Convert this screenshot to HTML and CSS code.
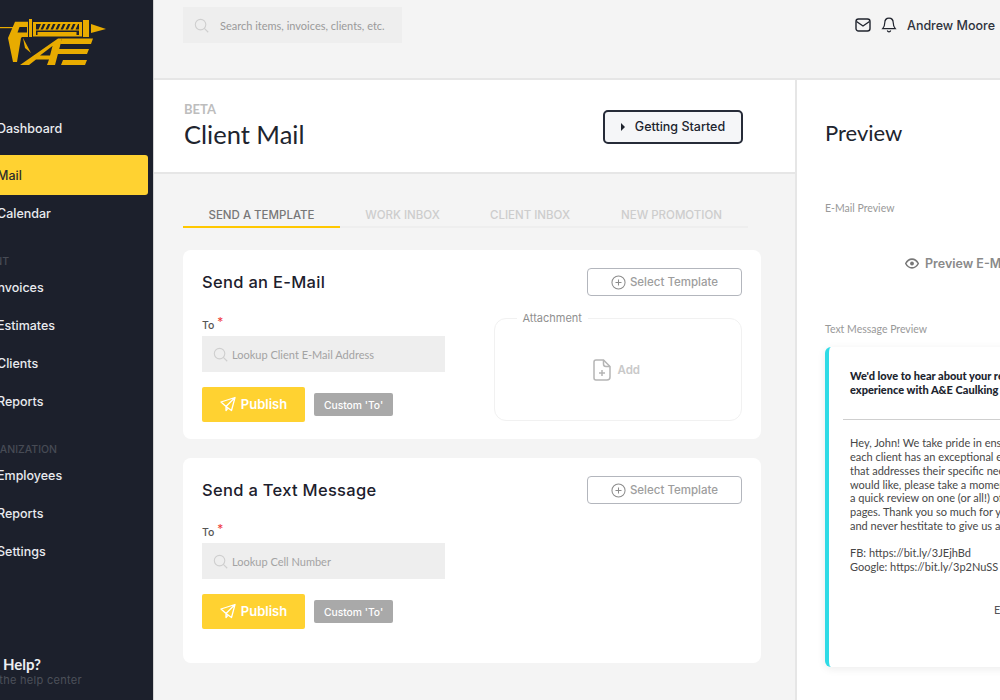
FILE: index.html
```html
<!DOCTYPE html>
<html lang="en">
<head>
    <meta charset="UTF-8">
    <title>Client Mail</title>
    <link rel="stylesheet" href="styles.css">
</head>
<body>
    <div class="app">
        <aside class="sidebar">
            <svg class="logo" viewBox="0 0 110 70" xmlns="http://www.w3.org/2000/svg">
                <rect x="0" y="27" width="16" height="1.2"/>
                <path d="M15 21.700H28V37H22L21 38L17 62H13L8 38Z"/>
                <path class="logo-cut" d="M19.500 27H27V32.500H17.500Z"/>
                <path d="M23 38L31 53L25 48Z"/>
                <rect x="29" y="19" width="3" height="18"/>
                <path d="M33 22H82V36.500H33Z"/>
                <path class="logo-cut" d="M36 24H41L38.500 29.500H36ZM43 24H45.500L43 29.500H40.500ZM48 24H50.500L48 29.500H45.500ZM53 24H55.500L53 29.500H50.500ZM58 24H60.500L58 29.500H55.500ZM63 24H65.500L63 29.500H60.500ZM68 24H70.500L68 29.500H65.500ZM73 24H75.500L73 29.500H70.500ZM78 24H79V29.500H75.500ZM36 30.500H79V32H37.500V35H36ZM76.500 32H79V35H76.500Z"/>
                <rect x="83" y="20" width="6" height="17"/>
                <path d="M91 24L106 29L91 33Z"/>
                <path d="M20 65L58 38.500H62L55 65H47L49 59.500H36L29 65ZM52.500 46L40 55.500H50Z"/>
                <path d="M62 38.500H93L91 44H60ZM58 49H89L87 54H56ZM63 60H87L85 65H61Z"/>
            </svg>

            <nav class="nav">
                <a class="nav-item">Dashboard</a>
                <a class="nav-item nav-item-active">Mail</a>
                <a class="nav-item">Calendar</a>
                <div class="nav-label nav-label-short"><span>MANAGEMENT</span></div>
                <a class="nav-item nav-item-inset">Invoices</a>
                <a class="nav-item">Estimates</a>
                <a class="nav-item">Clients</a>
                <a class="nav-item">Reports</a>
                <div class="nav-label nav-label-long"><span>ORGANIZATION</span></div>
                <a class="nav-item">Employees</a>
                <a class="nav-item">Reports</a>
                <a class="nav-item">Settings</a>
            </nav>

            <div class="help">
                <div class="help-title"><span>Need Help?</span></div>
                <div class="help-text"><span>Visit the help center</span></div>
            </div>
        </aside>

        <div class="main">
            <header class="topbar">
                <div class="search">
                    <svg class="search-icon" viewBox="0 0 16 16" fill="none" stroke="currentColor" stroke-width="1.2" xmlns="http://www.w3.org/2000/svg">
                        <circle cx="7" cy="7" r="5.6"/>
                        <path d="M11 11l4.2 4.2"/>
                    </svg>
                    <span>Search items, invoices, clients, etc.</span>
                </div>
                <div class="user">
                    <svg class="user-icon" viewBox="0 0 16 16" fill="none" stroke="currentColor" stroke-width="1.4" xmlns="http://www.w3.org/2000/svg">
                        <rect x="1" y="2" width="14" height="12" rx="2.5"/>
                        <path d="M1.5 4.5L8 9l6.5-4.5"/>
                    </svg>
                    <svg class="user-icon" viewBox="0 0 16 16" fill="none" stroke="currentColor" stroke-width="1.2" xmlns="http://www.w3.org/2000/svg">
                        <path d="M8 1.200c-2.700 0-4.200 2-4.200 4.400 0 3.200-.9 4.600-2.100 6h12.600c-1.200-1.400-2.100-2.800-2.100-6 0-2.400-1.500-4.400-4.200-4.400z"/>
                        <path d="M6.300 13.500c.3 1 .9 1.400 1.700 1.400s1.400-.4 1.700-1.400"/>
                    </svg>
                    <span class="user-name">Andrew Moore</span>
                </div>
            </header>

            <div class="content">
                <section class="compose">
                    <div class="page-head">
                        <div>
                            <div class="beta">BETA</div>
                            <h1>Client Mail</h1>
                        </div>
                        <button class="start-btn"><i class="start-arrow"></i>Getting Started</button>
                    </div>

                    <div class="compose-body">
                        <div class="tabs">
                            <div class="tab tab-active">SEND A TEMPLATE</div>
                            <div class="tab">WORK INBOX</div>
                            <div class="tab">CLIENT INBOX</div>
                            <div class="tab">NEW PROMOTION</div>
                        </div>

                        <div class="card">
                            <div class="card-head">
                                <h2>Send an E-Mail</h2>
                                <button class="template-btn">
                                    <svg viewBox="0 0 16 16" fill="none" stroke="currentColor" stroke-width="1.100" xmlns="http://www.w3.org/2000/svg">
                                        <circle cx="8" cy="8" r="7"/>
                                        <path d="M8 4.800v6.400M4.800 8h6.400"/>
                                    </svg>
                                    Select Template
                                </button>
                            </div>
                            <div class="card-row">
                                <div class="field">
                                    <label>To <b>*</b></label>
                                    <div class="lookup">
                                        <svg viewBox="0 0 16 16" fill="none" stroke="currentColor" stroke-width="1.200" xmlns="http://www.w3.org/2000/svg">
                                            <circle cx="7" cy="7" r="5.600"/>
                                            <path d="M11 11l4.200 4.200"/>
                                        </svg>
                                        <span>Lookup Client E-Mail Address</span>
                                    </div>
                                    <div class="actions">
                                        <button class="publish">
                                            <svg viewBox="0 0 16 16" fill="none" stroke="currentColor" stroke-width="1.300" stroke-linejoin="round" xmlns="http://www.w3.org/2000/svg">
                                                <path d="M1 6L15 1.500 11.500 14.500 6 10.500 1 6zM6 10.500L15 1.500M6 10.500V14.500L8 12"/>
                                            </svg>
                                            Publish
                                        </button>
                                        <button class="custom">Custom 'To'</button>
                                    </div>
                                </div>
                                <fieldset class="attachment">
                                    <legend>Attachment</legend>
                                    <div class="attachment-add">
                                        <svg viewBox="0 0 18 22" fill="none" stroke="currentColor" stroke-width="1.500" xmlns="http://www.w3.org/2000/svg">
                                            <path d="M3 1h7.500L17 7.500V18a3 3 0 0 1-3 3H3a2 2 0 0 1-2-2V3a2 2 0 0 1 2-2z"/>
                                            <path d="M10.500 1v4a2.500 2.500 0 0 0 2.500 2.500h4M9 11v6M6 14h6"/>
                                        </svg>
                                        Add
                                    </div>
                                </fieldset>
                            </div>
                        </div>

                        <div class="card card-text">
                            <div class="card-head">
                                <h2>Send a Text Message</h2>
                                <button class="template-btn">
                                    <svg viewBox="0 0 16 16" fill="none" stroke="currentColor" stroke-width="1.100" xmlns="http://www.w3.org/2000/svg">
                                        <circle cx="8" cy="8" r="7"/>
                                        <path d="M8 4.800v6.400M4.800 8h6.400"/>
                                    </svg>
                                    Select Template
                                </button>
                            </div>
                            <div class="card-row">
                                <div class="field">
                                    <label>To <b>*</b></label>
                                    <div class="lookup">
                                        <svg viewBox="0 0 16 16" fill="none" stroke="currentColor" stroke-width="1.200" xmlns="http://www.w3.org/2000/svg">
                                            <circle cx="7" cy="7" r="5.600"/>
                                            <path d="M11 11l4.200 4.200"/>
                                        </svg>
                                        <span>Lookup Cell Number</span>
                                    </div>
                                    <div class="actions">
                                        <button class="publish">
                                            <svg viewBox="0 0 16 16" fill="none" stroke="currentColor" stroke-width="1.300" stroke-linejoin="round" xmlns="http://www.w3.org/2000/svg">
                                                <path d="M1 6L15 1.500 11.500 14.500 6 10.500 1 6zM6 10.500L15 1.500M6 10.500V14.500L8 12"/>
                                            </svg>
                                            Publish
                                        </button>
                                        <button class="custom">Custom 'To'</button>
                                    </div>
                                </div>
                            </div>
                        </div>
                    </div>
                </section>

                <section class="preview">
                    <h1>Preview</h1>
                    <div class="preview-label">E-Mail Preview</div>
                    <div class="preview-mail">
                        <svg viewBox="0 0 16 12" fill="none" stroke="currentColor" stroke-width="1.800" xmlns="http://www.w3.org/2000/svg">
                            <path d="M.8 6C2.500 2.800 5 1 8 1s5.500 1.800 7.200 5c-1.700 3.200-4.200 5-7.200 5S2.500 9.200.8 6z"/>
                            <circle cx="8" cy="6" r="2.200" fill="currentColor" stroke="none"/>
                        </svg>
                        Preview E-Mail
                    </div>
                    <div class="preview-label">Text Message Preview</div>
                    <div class="sms">
                        <div class="sms-title">We'd love to hear about your recent<br>experience with A&amp;E Caulking</div>
                        <hr class="sms-rule">
                        <p class="sms-body">Hey, John! We take pride in ensuring that<br>each client has an exceptional experience<br>that addresses their specific needs. If you<br>would like, please take a moment to leave<br>a quick review on one (or all!) of our review<br>pages. Thank you so much for your business,<br>and never hestitate to give us a call!<br><br>FB: https://bit.ly/3JEjhBd<br>Google: https://bit.ly/3p2NuSS</p>
                        <div class="sms-edit">Edit</div>
                    </div>
                </section>
            </div>
        </div>
    </div>
</body>
</html>
```

FILE: styles.css
```css
:root {
    --clr-side: #1c202c;
    --clr-bg: #f4f4f4;
    --clr-line: #e6e6e6;
    --clr-yellow: #ffd231;
    --clr-input: #eeeeee;
    --clr-text: #20242e;
    --font-head: 'Inter', 'Liberation Sans', sans-serif;
    --font-body: 'Lato', 'Liberation Sans', sans-serif;
}

* {
    margin: 0;
    padding: 0;
    box-sizing: border-box;
}

html,
body {
    width: 1000px;
    height: 700px;
    overflow: hidden;
}

body {
    font-family: var(--font-head);
    color: var(--clr-text);
    background: #fff;
}

button {
    font-family: inherit;
}

.app {
    display: flex;
    height: 100%;
}

/* Sidebar */
.sidebar {
    flex: none;
    width: 154px;
    height: 100%;
    background: var(--clr-side);
    border-right: 1px solid #d4d4d4;
    display: flex;
    flex-direction: column;
    overflow: hidden;
}

.logo {
    flex: none;
    display: block;
    width: 110px;
    height: 70px;
    margin-bottom: 39px;
    fill: #e8ab00;
}

.logo-cut {
    fill: var(--clr-side);
}

.nav {
    display: flex;
    flex-direction: column;
}

.nav-item {
    display: flex;
    align-items: center;
    height: 38px;
    margin-left: -3px;
    width: 151px;
    font-size: 12.500px;
    font-weight: 500;
    color: #e9ebef;
    white-space: nowrap;
}

.nav-item-inset {
    margin-left: -6px;
    width: 154px;
}

.nav-item-active {
    height: 40px;
    margin-top: 8px;
    margin-bottom: -1px;
    background: var(--clr-yellow);
    border-radius: 3px;
    color: #2c2c2c;
}

.nav-label {
    display: flex;
    justify-content: flex-end;
    align-items: center;
    height: 15px;
    margin-top: 22px;
    margin-bottom: -1px;
    font-size: 10.500px;
    font-weight: 500;
    color: #474b55;
    white-space: nowrap;
}

.nav-label-short {
    width: 9px;
}

.nav-label-long {
    width: 57px;
}

.help {
    margin-top: auto;
    padding-bottom: 13px;
}

.help-title,
.help-text {
    display: flex;
    justify-content: flex-end;
    white-space: nowrap;
}

.help-title {
    width: 41px;
    font-family: var(--font-body);
    font-size: 15px;
    font-weight: 700;
    color: #eceef1;
    line-height: 18px;
}

.help-text {
    width: 82px;
    font-size: 11px;
    letter-spacing: 0.3px;
    color: #4c505a;
    line-height: 14px;
}

/* Main */
.main {
    flex: none;
    width: 846px;
    display: flex;
    flex-direction: column;
}

.topbar {
    flex: none;
    display: flex;
    justify-content: space-between;
    height: 80px;
    padding: 7px 5px 0 29px;
    background: var(--clr-bg);
    border-bottom: 2px solid var(--clr-line);
}

.search {
    display: flex;
    align-items: center;
    width: 219px;
    height: 36px;
    padding-left: 11px;
    background: var(--clr-input);
    font-family: var(--font-body);
    font-size: 11px;
    color: #9a9a9a;
}

.search-icon {
    width: 15px;
    height: 15px;
    margin-right: 11px;
    color: #cfcfcf;
}

.user {
    display: flex;
    align-items: center;
    height: 36px;
}

.user-icon {
    width: 16px;
    height: 16px;
    margin-right: 10px;
    color: #20242e;
}

.user-name {
    font-size: 12.500px;
    font-weight: 500;
    color: #2e323c;
}

.content {
    flex: 1;
    display: flex;
    min-height: 0;
}

.compose {
    flex: none;
    width: 643px;
    display: flex;
    flex-direction: column;
    border-right: 2px solid var(--clr-line);
    background: var(--clr-bg);
}

.page-head {
    flex: none;
    display: flex;
    justify-content: space-between;
    align-items: center;
    height: 94px;
    padding: 3px 52px 0 30px;
    background: #fff;
    border-bottom: 2px solid var(--clr-line);
}

.beta {
    font-family: var(--font-body);
    font-size: 13px;
    font-weight: 700;
    line-height: 13px;
    color: #bdbdbd;
}

h1 {
    font-family: var(--font-body);
    font-size: 25.500px;
    font-weight: 400;
    line-height: 36px;
    color: var(--clr-text);
}

.start-btn {
    display: flex;
    align-items: center;
    justify-content: center;
    width: 140px;
    height: 34px;
    margin-top: -2px;
    border: 2px solid #262b38;
    border-radius: 5px;
    background: #f5f6f8;
    font-size: 12.500px;
    font-weight: 500;
    color: #20242e;
}

.start-arrow {
    width: 0;
    height: 0;
    margin-right: 10px;
    border-left: 4px solid #20242e;
    border-top: 4px solid transparent;
    border-bottom: 4px solid transparent;
}

.compose-body {
    padding: 33px 34px 0 29px;
}

.tabs {
    display: grid;
    grid-template-columns: 157px 125px 130px 153px;
    margin-bottom: 22px;
}

.tab {
    height: 21px;
    font-size: 11.500px;
    font-weight: 500;
    line-height: 17px;
    text-align: center;
    color: #cdcdcd;
    border-bottom: 2px solid #eeeeee;
}

.tab-active {
    color: #777;
    border-bottom-color: #ffc800;
}

.card {
    width: 578px;
    padding: 18px 19px 17px;
    background: #fff;
    border-radius: 8px;
}

.card-text {
    margin-top: 19px;
    padding-bottom: 34px;
}

.card-head {
    display: flex;
    justify-content: space-between;
    align-items: center;
    height: 28px;
    margin-bottom: 22px;
}

.card-text .card-head {
    margin-bottom: 21px;
}

h2 {
    font-size: 16.500px;
    font-weight: 500;
    letter-spacing: 0.3px;
    color: #1c202c;
}

.template-btn {
    display: flex;
    align-items: center;
    justify-content: center;
    gap: 4px;
    width: 155px;
    height: 28px;
    border: 1.500px solid #b3b6bd;
    border-radius: 4px;
    background: #fff;
    font-size: 11.500px;
    font-weight: 500;
    color: #9d9d9d;
}

.template-btn svg {
    width: 15px;
    height: 15px;
    color: #8c8c8c;
}

.card-row {
    display: flex;
    align-items: flex-start;
}

.field {
    width: 243px;
}

.field label {
    display: block;
    height: 18px;
    font-size: 10.500px;
    font-weight: 500;
    line-height: 14px;
    color: #555;
}

.field label b {
    position: relative;
    top: -3px;
    font-size: 12px;
    font-weight: 400;
    color: #ef3b3b;
}

.lookup {
    display: flex;
    align-items: center;
    height: 36px;
    padding-left: 11px;
    background: var(--clr-input);
    font-family: var(--font-body);
    font-size: 11px;
    color: #a3a3a3;
}

.lookup svg {
    width: 15px;
    height: 15px;
    margin-right: 4px;
    color: #cfcfcf;
}

.actions {
    display: flex;
    align-items: center;
    gap: 9px;
    margin-top: 15px;
}

.publish {
    display: flex;
    align-items: center;
    justify-content: center;
    gap: 5px;
    width: 103px;
    height: 35px;
    padding-bottom: 1px;
    border: none;
    border-radius: 2px;
    background: var(--clr-yellow);
    font-size: 13px;
    font-weight: 600;
    color: #fff;
}

.publish svg {
    width: 16px;
    height: 16px;
}

.custom {
    width: 79px;
    height: 23px;
    border: none;
    border-radius: 2px;
    background: #a9a9a9;
    font-size: 10.300px;
    font-weight: 500;
    color: #fff;
}

.attachment {
    width: 249px;
    height: 109px;
    margin-top: -6px;
    margin-left: 49px;
    border: 1px solid #f1f1f1;
    border-radius: 12px;
}

.attachment legend {
    margin-left: 22px;
    padding: 0 6px;
    font-size: 11px;
    line-height: 13px;
    color: #8f8f8f;
}

.attachment-add {
    display: flex;
    align-items: center;
    justify-content: center;
    gap: 6px;
    height: 90px;
    padding-right: 2px;
    font-size: 11.500px;
    font-weight: 600;
    color: #c9c9c9;
}

.attachment-add svg {
    width: 18px;
    height: 22px;
    color: #b5b5b5;
}

/* Preview panel */
.preview {
    flex: none;
    width: 400px;
    padding: 35px 0 0 28px;
    background: #fff;
}

.preview h1 {
    font-size: 22px;
    line-height: 36px;
    margin-bottom: 51px;
}

.preview-label {
    font-family: var(--font-body);
    font-size: 10.500px;
    line-height: 13px;
    color: #999;
}

.preview-mail {
    display: flex;
    align-items: center;
    gap: 6px;
    height: 108px;
    padding-left: 80px;
    padding-bottom: 12px;
    font-size: 12.500px;
    font-weight: 600;
    color: #8a8a8a;
    white-space: nowrap;
}

.preview-mail svg {
    width: 14px;
    height: 11px;
    color: #777;
}

.sms {
    width: 300px;
    height: 320px;
    margin-top: 11px;
    padding: 22px 0 0 21px;
    background: #fff;
    border-left: 4px solid #2fdbe6;
    border-radius: 6px;
    box-shadow: 0 2px 8px rgba(0, 0, 0, 0.08);
    font-family: var(--font-body);
    font-size: 11px;
    line-height: 13.700px;
    white-space: nowrap;
}

.sms-title {
    font-weight: 900;
    color: #20242e;
}

.sms-rule {
    width: 250px;
    margin: 23px 0 16px -7px;
    border: none;
    border-top: 1px solid #cfcfcf;
}

.sms-body {
    color: #474747;
}

.sms-edit {
    margin-top: 30px;
    padding-left: 144px;
    color: #555;
}
```
